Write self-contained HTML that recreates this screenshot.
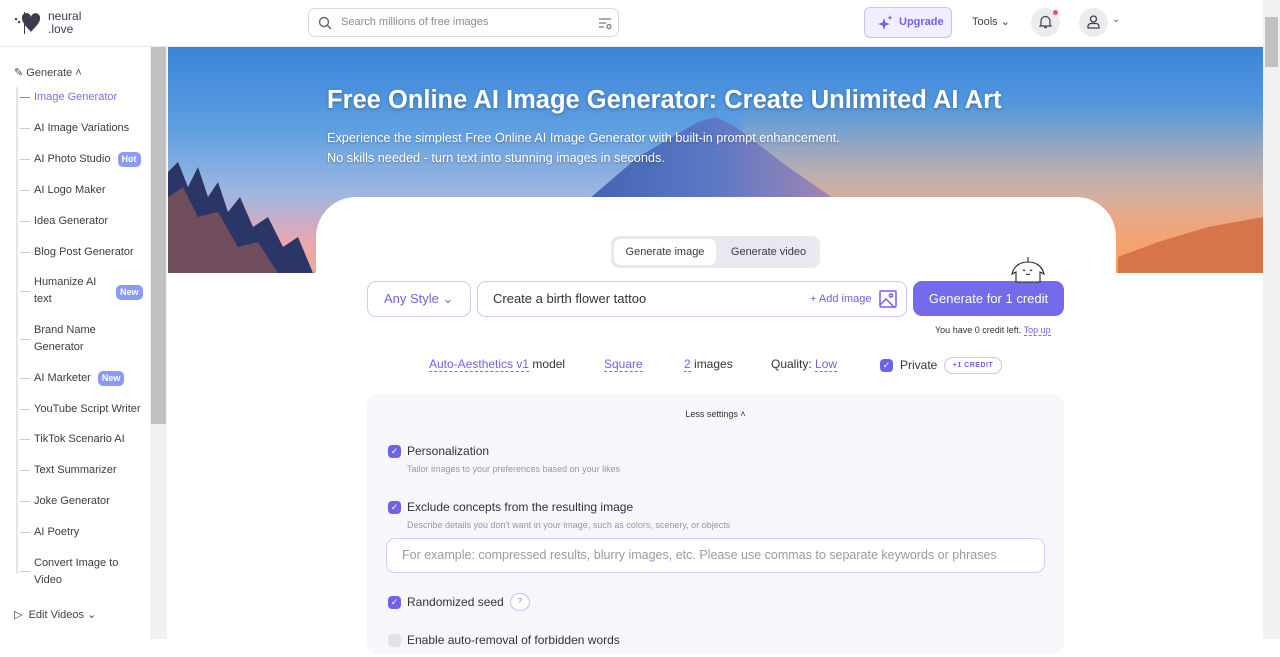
<!DOCTYPE html>
<html><head><meta charset="utf-8"><style>
*{box-sizing:border-box;margin:0;padding:0}
body{width:1280px;height:639px;overflow:hidden;font-family:"Liberation Sans",sans-serif;background:#fff;color:#3a3a4a;position:relative}
.top{position:absolute;left:0;top:0;width:1263px;height:47px;background:#fff;border-bottom:1px solid #e8e8ef;z-index:5}
.side{position:absolute;left:0;top:47px;width:150px;height:592px;background:#fff}
.sb1{position:absolute;left:150px;top:47px;width:17px;height:592px;background:#f1f1f1}
.sb1 i{position:absolute;left:1px;top:0;width:15px;height:377px;background:#c1c1c1}
.sb2{position:absolute;left:1263px;top:0;width:17px;height:639px;background:#f1f1f1}
.sb2 i{position:absolute;left:2px;top:17px;width:13px;height:50px;background:#c1c1c1}
.hero{position:absolute;left:168px;top:47px;width:1095px;height:226px;overflow:hidden;
background:linear-gradient(180deg,#3b84d8 0%,#5c9ee0 35%,#9fb7e0 65%,#e7a7b4 85%,#f0a98e 100%)}
.nav a{position:absolute;left:34px;font-size:11px;color:#3a3a4a;line-height:17px}
.nav b{position:absolute;left:20px;width:10px;height:1px;background:#ccc}
.badge{display:inline-block;background:#8a9bf7;color:#fff;font-size:9px;font-weight:bold;border-radius:5px;padding:2px 4px;line-height:11px}
.card{position:absolute;left:316px;top:197px;width:800px;height:460px;background:#fff;border-radius:40px 40px 0 0}
.chk{position:absolute;width:13px;height:13px;border-radius:4px;background:#6e63e8;color:#fff;font-size:9px;text-align:center;line-height:13px}
.u{border-bottom:1px dashed #7b6ff0;color:#6e63e8}
</style></head><body>
<div class="top">
 <svg style="position:absolute;left:12px;top:10px" width="32" height="26" viewBox="0 0 32 26"><path d="M10 6c2-4 8-4 9 1 1-5 8-5 9 0 1 6-6 11-9 15-3-4-10-9-9-16z" fill="#3b3b50"/><rect x="3" y="8" width="2" height="2" fill="#3b3b50"/><rect x="6" y="11" width="2" height="2" fill="#3b3b50"/><rect x="12" y="2" width="1" height="22" fill="#3b3b50"/></svg>
 <div style="position:absolute;left:48px;top:10px;font-size:12px;line-height:13px;color:#3b3b50">neural<br>.love</div>
 <div style="position:absolute;left:308px;top:8px;width:311px;height:29px;border:1px solid #d9d9e3;border-radius:7px">
  <svg style="position:absolute;left:9px;top:7px" width="14" height="14" viewBox="0 0 14 14" fill="none" stroke="#666" stroke-width="1.4"><circle cx="6" cy="6" r="4.5"/><path d="M9.5 9.5L13 13"/></svg>
  <span style="position:absolute;left:32px;top:7px;font-size:11px;color:#8a8a96">Search millions of free images</span>
  <svg style="position:absolute;left:289px;top:8px" width="14" height="13" viewBox="0 0 14 13" fill="none" stroke="#777" stroke-width="1.2"><path d="M1 2h12M1 6h7M1 10h5"/><circle cx="11" cy="9.5" r="2"/></svg>
 </div>
 <div style="position:absolute;left:864px;top:7px;width:88px;height:31px;background:#f1efff;border:1px solid #c9c2fb;border-radius:6px;color:#6e63e8;font-size:11px;font-weight:bold;line-height:29px;padding-left:34px">Upgrade
  <svg style="position:absolute;left:12px;top:6px" width="17" height="17" viewBox="0 0 17 17" fill="#6e63e8"><path d="M7 4l1.5 4.5L13 10l-4.5 1.5L7 16l-1.5-4.5L1 10l4.5-1.5z"/><path d="M13 1l.7 2 2 .7-2 .7-.7 2-.7-2-2-.7 2-.7z"/></svg></div>
 <div style="position:absolute;left:972px;top:15px;font-size:11px;color:#444">Tools ⌄</div>
 <div style="position:absolute;left:1031px;top:8px;width:29px;height:29px;border-radius:50%;background:#ebebf0">
  <svg style="position:absolute;left:8px;top:7px" width="13" height="14" viewBox="0 0 13 14" fill="none" stroke="#444" stroke-width="1.2"><path d="M2 10V6a4.5 4.5 0 019 0v4l1 1H1z M5 12.5h3"/></svg></div>
 <div style="position:absolute;left:1053px;top:10px;width:5px;height:5px;border-radius:50%;background:#f0506e"></div>
 <div style="position:absolute;left:1079px;top:8px;width:29px;height:29px;border-radius:50%;background:#ebebf0">
  <svg style="position:absolute;left:8px;top:7px" width="13" height="14" viewBox="0 0 13 14" fill="none" stroke="#444" stroke-width="1.3"><circle cx="6.5" cy="4" r="3"/><path d="M1 13v-1.5a3 3 0 013-3h5a3 3 0 013 3V13z"/></svg></div>
 <div style="position:absolute;left:1112px;top:14px;font-size:10px;color:#555">⌄</div>
</div>
<div class="side">
 <div style="position:absolute;left:14px;top:19px;font-size:11px;color:#444">✎ Generate ˄</div>
 <div style="position:absolute;left:16px;top:40px;width:2px;height:486px;background:#e4e4ea"></div>
 <div class="nav">
  <b style="top:50px;background:#8b7ff0"></b><a style="top:42px;color:#7b6ff0">Image Generator</a>
  <b style="top:81px"></b><a style="top:73px">AI Image Variations</a>
  <b style="top:112px"></b><a style="top:104px">AI Photo Studio <span class="badge" style="margin-left:4px">Hot</span></a>
  <b style="top:143px"></b><a style="top:135px">AI Logo Maker</a>
  <b style="top:174px"></b><a style="top:166px">Idea Generator</a>
  <b style="top:205px"></b><a style="top:197px">Blog Post Generator</a>
  <b style="top:244px"></b><a style="top:227px">Humanize AI<br>text</a><span class="badge" style="position:absolute;left:116px;top:238px">New</span>
  <b style="top:292px"></b><a style="top:275px">Brand Name<br>Generator</a>
  <b style="top:331px"></b><a style="top:323px">AI Marketer <span class="badge" style="margin-left:4px">New</span></a>
  <b style="top:362px"></b><a style="top:354px">YouTube Script Writer</a>
  <b style="top:392px"></b><a style="top:384px">TikTok Scenario AI</a>
  <b style="top:423px"></b><a style="top:415px">Text Summarizer</a>
  <b style="top:454px"></b><a style="top:446px">Joke Generator</a>
  <b style="top:485px"></b><a style="top:477px">AI Poetry</a>
  <b style="top:524px"></b><a style="top:508px">Convert Image to<br>Video</a>
 </div>
 <div style="position:absolute;left:14px;top:561px;font-size:11px;color:#444">▷&nbsp; Edit Videos ⌄</div>
</div>
<div class="sb1"><i></i></div>
<div class="sb2"><i></i></div>
<div class="hero">
 <div style="position:absolute;right:0;top:0;width:520px;height:226px;background:linear-gradient(180deg,rgba(0,0,0,0) 25%,rgba(250,170,110,.55) 65%,#f4a060 100%)"></div>
 <svg style="position:absolute;left:0;top:0" width="1095" height="226" viewBox="0 0 1095 226">
  <defs><linearGradient id="m" x1="0" x2="1"><stop offset="0" stop-color="#3256a8"/><stop offset=".5" stop-color="#5b78c4"/><stop offset="1" stop-color="#d98fa8"/></linearGradient></defs>
  <polygon points="330,226 400,170 470,110 530,75 548,70 565,78 620,120 700,175 760,226" fill="url(#m)"/>
  <polygon points="0,125 10,115 20,140 30,120 40,150 50,135 60,165 72,150 85,180 100,170 115,200 130,190 145,226 0,226" fill="#2a3568"/>
  <polygon points="0,150 15,140 30,170 50,165 70,200 90,195 110,226 0,226" fill="#b4654f" opacity=".5"/>
  <polygon points="950,210 990,195 1040,180 1095,170 1095,226 950,226" fill="#d8744a"/>
 </svg>
 <div style="position:absolute;left:159px;top:39px;font-size:25.5px;font-weight:bold;color:#fff;text-shadow:0 1px 3px rgba(0,0,0,.3);white-space:nowrap">Free Online AI Image Generator: Create Unlimited AI Art</div>
 <div style="position:absolute;left:159px;top:82px;font-size:12.7px;color:#fff;line-height:19.5px;text-shadow:0 1px 2px rgba(0,0,0,.3)">Experience the simplest Free Online AI Image Generator with built-in prompt enhancement.<br>No skills needed - turn text into stunning images in seconds.</div>
</div>
<div class="card"></div>
<div style="position:absolute;left:611px;top:236px;width:209px;height:32px;background:#e8e8f0;border-radius:8px">
 <div style="position:absolute;left:3px;top:3px;width:102px;height:26px;background:#fff;border-radius:7px;font-size:11px;text-align:center;line-height:26px">Generate image</div>
 <div style="position:absolute;left:110px;top:3px;width:95px;font-size:11px;text-align:center;line-height:26px">Generate video</div>
</div>
<svg style="position:absolute;left:1008px;top:256px;z-index:3" width="40" height="28" viewBox="0 0 40 28" fill="#fff" stroke="#222" stroke-width="1.1"><path d="M4 18c2-8 8-12 16-12s14 4 16 12l-4-2v10H8V16z"/><path d="M20 6V1"/><path d="M15 15q1 -2 2 0M22 15q1-2 2 0M18 18q2 1 4 0" fill="none"/></svg>
<div style="position:absolute;left:367px;top:281px;width:104px;height:36px;border:1px solid #cfc9f8;border-radius:9px;color:#6e63e8;font-size:13px;line-height:34px;padding-left:16px">Any Style ⌄</div>
<div style="position:absolute;left:477px;top:281px;width:430px;height:36px;border:1px solid #cfc9f8;border-radius:9px;font-size:13px;line-height:34px;padding-left:15px;color:#333">Create a birth flower tattoo
 <span style="position:absolute;left:332px;top:0;font-size:11px;color:#6e63e8">+ Add image</span>
 <svg style="position:absolute;left:401px;top:8px" width="18" height="18" viewBox="0 0 18 18" fill="none" stroke="#6e63e8" stroke-width="1.5"><rect x="1" y="1" width="16" height="16" rx="1"/><circle cx="12" cy="5.5" r="1.6"/><path d="M1 15l6-6 9 9"/></svg></div>
<div style="position:absolute;left:913px;top:281px;width:151px;height:35px;background:#7569ec;border-radius:9px;color:#fff;font-size:13px;line-height:35px;text-align:center">Generate for 1 credit</div>
<div style="position:absolute;left:935px;top:325px;font-size:9px;color:#333">You have 0 credit left. <span class="u">Top up</span></div>
<div style="position:absolute;left:429px;top:357px;font-size:12px;color:#333;white-space:nowrap"><span class="u">Auto-Aesthetics v1</span> model</div>
<div style="position:absolute;left:604px;top:357px;font-size:12px"><span class="u">Square</span></div>
<div style="position:absolute;left:684px;top:357px;font-size:12px;color:#333"><span class="u">2</span> images</div>
<div style="position:absolute;left:771px;top:357px;font-size:12px;color:#333">Quality: <span class="u">Low</span></div>
<div class="chk" style="left:880px;top:359px">✓</div>
<div style="position:absolute;left:900px;top:358px;font-size:12px;color:#333">Private</div>
<div style="position:absolute;left:944px;top:357px;width:58px;height:17px;border:1px solid #c9c2fb;border-radius:9px;font-size:7px;font-weight:bold;color:#6e63e8;text-align:center;line-height:15px;letter-spacing:.5px">+1 CREDIT</div>
<div style="position:absolute;left:367px;top:394px;width:697px;height:260px;background:#f6f6fb;border-radius:12px">
 <div style="position:absolute;left:0;width:100%;top:15px;text-align:center;font-size:9px;color:#333">Less settings ˄</div>
 <div class="chk" style="left:21px;top:51px">✓</div>
 <div style="position:absolute;left:40px;top:50px;font-size:12px;color:#333">Personalization</div>
 <div style="position:absolute;left:40px;top:70px;font-size:9px;color:#999">Tailor images to your preferences based on your likes</div>
 <div class="chk" style="left:21px;top:107px">✓</div>
 <div style="position:absolute;left:40px;top:106px;font-size:12px;color:#333">Exclude concepts from the resulting image</div>
 <div style="position:absolute;left:40px;top:126px;font-size:9px;color:#999">Describe details you don't want in your image, such as colors, scenery, or objects</div>
 <div style="position:absolute;left:19px;top:144px;width:659px;height:35px;background:#fff;border:1px solid #d4cef9;border-radius:9px;font-size:12.5px;color:#9a9aa6;line-height:33px;padding-left:15px;white-space:nowrap">For example: compressed results, blurry images, etc. Please use commas to separate keywords or phrases</div>
 <div class="chk" style="left:21px;top:202px">✓</div>
 <div style="position:absolute;left:40px;top:201px;font-size:12px;color:#333">Randomized seed</div>
 <div style="position:absolute;left:143px;top:199px;width:20px;height:18px;border:1px solid #c9c2fb;border-radius:50%;background:#fff;font-size:7px;color:#6e63e8;text-align:center;line-height:16px">?</div>
 <div class="chk" style="left:21px;top:240px;background:#e2e2ea"></div>
 <div style="position:absolute;left:40px;top:239px;font-size:12px;color:#333">Enable auto-removal of forbidden words</div>
</div>
</body></html>
